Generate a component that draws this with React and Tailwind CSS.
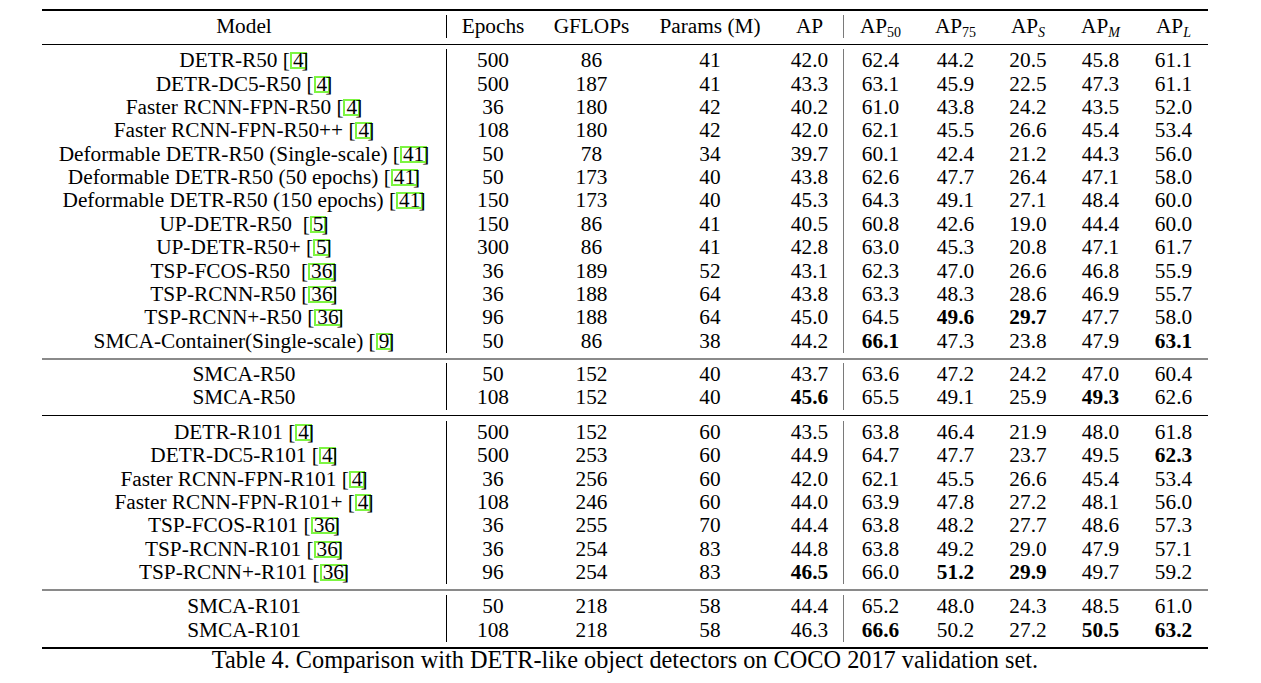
import React from "react";

// column widths: Model | Epochs GFLOPs Params AP | AP50 AP75 APs APm APl
const W = [
  "w-[404px]",
  "w-[93px]",
  "w-[105px]",
  "w-[132px]",
  "w-[67px]",
  "w-[74px]",
  "w-[77px]",
  "w-[68px]",
  "w-[77px]",
  "w-[69px]",
];

const blocks = [
  {
    pad: "pt-[4.3px] pb-[5px]",
    rule: "h-[2px] bg-[#8a8a8a]",
    rows: [
      ["DETR-R50 ", "4", "500 86 41 42.0 62.4 44.2 20.5 45.8 61.1"],
      ["DETR-DC5-R50 ", "4", "500 187 41 43.3 63.1 45.9 22.5 47.3 61.1"],
      ["Faster RCNN-FPN-R50 ", "4", "36 180 42 40.2 61.0 43.8 24.2 43.5 52.0"],
      ["Faster RCNN-FPN-R50++ ", "4", "108 180 42 42.0 62.1 45.5 26.6 45.4 53.4"],
      ["Deformable DETR-R50 (Single-scale) ", "41", "50 78 34 39.7 60.1 42.4 21.2 44.3 56.0"],
      ["Deformable DETR-R50 (50 epochs) ", "41", "50 173 40 43.8 62.6 47.7 26.4 47.1 58.0"],
      ["Deformable DETR-R50 (150 epochs) ", "41", "150 173 40 45.3 64.3 49.1 27.1 48.4 60.0"],
      ["UP-DETR-R50\u00a0 ", "5", "150 86 41 40.5 60.8 42.6 19.0 44.4 60.0"],
      ["UP-DETR-R50+ ", "5", "300 86 41 42.8 63.0 45.3 20.8 47.1 61.7"],
      ["TSP-FCOS-R50\u00a0 ", "36", "36 189 52 43.1 62.3 47.0 26.6 46.8 55.9"],
      ["TSP-RCNN-R50 ", "36", "36 188 64 43.8 63.3 48.3 28.6 46.9 55.7"],
      ["TSP-RCNN+-R50 ", "36", "96 188 64 45.0 64.5 *49.6 *29.7 47.7 58.0"],
      ["SMCA-Container(Single-scale) ", "9", "50 86 38 44.2 *66.1 47.3 23.8 47.9 *63.1"],
    ],
  },
  {
    pad: "pt-[3px] pb-[5px]",
    rule: "h-px bg-black",
    rows: [
      ["SMCA-R50", null, "50 152 40 43.7 63.6 47.2 24.2 47.0 60.4"],
      ["SMCA-R50", null, "108 152 40 *45.6 65.5 49.1 25.9 *49.3 62.6"],
    ],
  },
  {
    pad: "pt-[5px] pb-[5px]",
    rule: "h-[2px] bg-[#8a8a8a]",
    rows: [
      ["DETR-R101 ", "4", "500 152 60 43.5 63.8 46.4 21.9 48.0 61.8"],
      ["DETR-DC5-R101 ", "4", "500 253 60 44.9 64.7 47.7 23.7 49.5 *62.3"],
      ["Faster RCNN-FPN-R101 ", "4", "36 256 60 42.0 62.1 45.5 26.6 45.4 53.4"],
      ["Faster RCNN-FPN-R101+ ", "4", "108 246 60 44.0 63.9 47.8 27.2 48.1 56.0"],
      ["TSP-FCOS-R101 ", "36", "36 255 70 44.4 63.8 48.2 27.7 48.6 57.3"],
      ["TSP-RCNN-R101 ", "36", "36 254 83 44.8 63.8 49.2 29.0 47.9 57.1"],
      ["TSP-RCNN+-R101 ", "36", "96 254 83 *46.5 66.0 *51.2 *29.9 49.7 59.2"],
    ],
  },
  {
    pad: "pt-[4px] pb-[5.2px]",
    rule: "h-[2px] bg-black",
    rows: [
      ["SMCA-R101", null, "50 218 58 44.4 65.2 48.0 24.3 48.5 61.0"],
      ["SMCA-R101", null, "108 218 58 46.3 *66.6 50.2 27.2 *50.5 *63.2"],
    ],
  },
];

function Cite({ n }) {
  return (
    <>
      [
      <span className="inline-block border-2 border-[#7df542] px-px leading-[13px]">
        {n}
      </span>
      <span className="relative -ml-[5px]">]</span>
    </>
  );
}

function Cell({ i, children }) {
  let sep = "";
  if (i === 1) sep = "border-l border-black";
  if (i === 5) sep = "border-l border-[#7a7a7a]";
  return (
    <div className={`${W[i]} shrink-0 text-center whitespace-nowrap ${sep}`}>
      {children}
    </div>
  );
}

function Row({ model, cite, vals }) {
  return (
    <div className="flex h-[23.39px] leading-[23.39px]">
      <Cell i={0}>
        {model}
        {cite && <Cite n={cite} />}
      </Cell>
      {vals.split(" ").map((v, k) => (
        <Cell key={k} i={k + 1}>
          {v.startsWith("*") ? <b className="font-bold">{v.slice(1)}</b> : v}
        </Cell>
      ))}
    </div>
  );
}

export default function App() {
  return (
    <div className="w-[1261px] h-[683px] bg-white text-black font-['Liberation_Serif','Times_New_Roman',serif] text-[21.3px] overflow-hidden">
      <div className="ml-[42px] w-[1166px]">
        {/* top rule */}
        <div className="mt-[9px] h-[2px] bg-black" />

        {/* header */}
        <div className="pt-[4px] pb-[5.5px]">
          <div className="flex h-[23.39px] leading-[23.39px]">
            <Cell i={0}>Model</Cell>
            <Cell i={1}>Epochs</Cell>
            <Cell i={2}>GFLOPs</Cell>
            <Cell i={3}>Params (M)</Cell>
            <Cell i={4}>AP</Cell>
            <Cell i={5}>
              AP<sub className="text-[14px]">50</sub>
            </Cell>
            <Cell i={6}>
              AP<sub className="text-[14px]">75</sub>
            </Cell>
            <Cell i={7}>
              AP<sub className="text-[14px] italic">S</sub>
            </Cell>
            <Cell i={8}>
              AP<sub className="text-[14px] italic">M</sub>
            </Cell>
            <Cell i={9}>
              AP<sub className="text-[14px] italic">L</sub>
            </Cell>
          </div>
        </div>
        <div className="h-px bg-black" />

        {blocks.map((b, bi) => (
          <div key={bi}>
            <div className={b.pad}>
              {b.rows.map(([m, c, v], ri) => (
                <Row key={ri} model={m} cite={c} vals={v} />
              ))}
            </div>
            <div className={b.rule} />
          </div>
        ))}

        {/* caption */}
        <div className="text-center text-[24.3px] leading-[22px] whitespace-nowrap">
          Table 4. Comparison with DETR-like object detectors on COCO 2017 validation set.
        </div>
      </div>
    </div>
  );
}
